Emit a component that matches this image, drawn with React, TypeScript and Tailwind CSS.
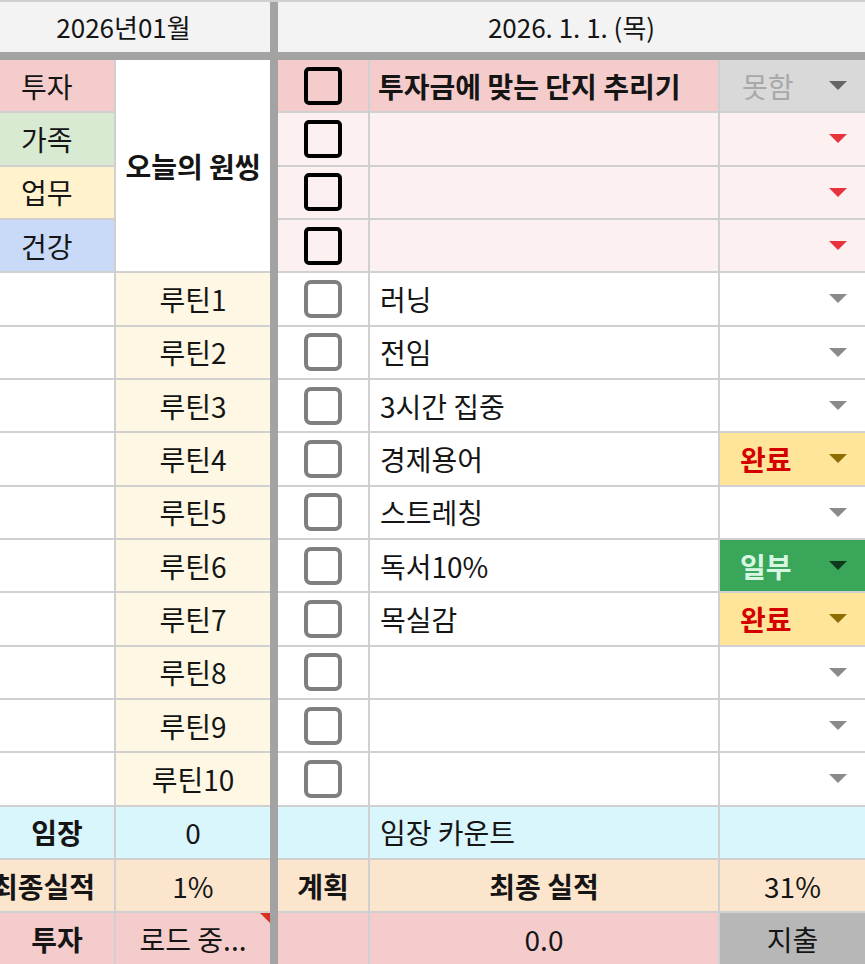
import React from "react";

const FONT = { fontFamily: '"Noto Sans CJK KR", "Noto Sans", sans-serif' };

function Tri({ color }: { color: string }) {
  return (
    <svg width="18" height="9" viewBox="0 0 18 9" className="shrink-0">
      <polygon points="0,0 18,0 9,9" fill={color} />
    </svg>
  );
}

function Box({ dark }: { dark?: boolean }) {
  return dark ? (
    <div className="w-[38px] h-[38px] rounded-[5px] border-[4px] border-black bg-transparent" />
  ) : (
    <div className="w-[38px] h-[38px] rounded-[7px] border-[4px] border-[#7f7f7f] bg-white" />
  );
}

type Status = "" | "완료" | "일부";

const routines: { n: number; text: string; status: Status }[] = [
  { n: 1, text: "러닝", status: "" },
  { n: 2, text: "전임", status: "" },
  { n: 3, text: "3시간 집중", status: "" },
  { n: 4, text: "경제용어", status: "완료" },
  { n: 5, text: "스트레칭", status: "" },
  { n: 6, text: "독서10%", status: "일부" },
  { n: 7, text: "목실감", status: "완료" },
  { n: 8, text: "", status: "" },
  { n: 9, text: "", status: "" },
  { n: 10, text: "", status: "" },
];

function StatusCell({ status }: { status: Status }) {
  if (status === "완료") {
    return (
      <div className="bg-[#ffe599] flex items-center justify-between pl-[20px] pr-[18px]">
        <span className="text-[#d40000] font-bold">완료</span>
        <Tri color="#8c6d00" />
      </div>
    );
  }
  if (status === "일부") {
    return (
      <div className="bg-[#3aa65a] flex items-center justify-between pl-[20px] pr-[18px]">
        <span className="text-[#d8f7e2] font-bold">일부</span>
        <Tri color="#0d3a1c" />
      </div>
    );
  }
  return (
    <div className="bg-white flex items-center justify-end pr-[18px]">
      <Tri color="#8a8a8a" />
    </div>
  );
}

export default function App() {
  return (
    <div
      className="w-[865px] h-[964px] overflow-hidden bg-white text-[28px] text-[#151515] leading-none"
      style={FONT}
    >
      <div className="border-t-2 border-[#d0d0d0]">
        {/* header */}
        <div className="grid grid-cols-[114px_154px_4px_90px_348px_145px] gap-x-[2px] h-[50px] bg-[#f3f3f3] text-[26px]">
          <div className="col-span-2 flex items-center justify-center pr-[23px]">2026년01월</div>
          <div className="bg-[#a3a3a3] -mx-[2px]" />
          <div className="col-span-3 flex items-center justify-center">2026. 1. 1. (목)</div>
        </div>
        <div className="h-[8px] bg-[#a3a3a3]" />
        {/* body */}
        <div className="grid grid-cols-[114px_154px_4px_90px_348px_145px] auto-rows-[51.33px] gap-[2px] bg-[#d0d0d0]">
          {/* bar */}
          <div className="col-start-3 row-start-1 row-span-17 bg-[#a3a3a3] -mx-[2px]" />

          {/* category labels */}
          <div className="col-start-1 row-start-1 bg-[#f4cccc] flex items-center pl-[21px]">투자</div>
          <div className="col-start-1 row-start-2 bg-[#d9ead3] flex items-center pl-[21px]">가족</div>
          <div className="col-start-1 row-start-3 bg-[#fff2cc] flex items-center pl-[21px]">업무</div>
          <div className="col-start-1 row-start-4 bg-[#c9daf8] flex items-center pl-[21px]">건강</div>
          <div className="col-start-2 row-start-1 row-span-4 bg-white flex items-center justify-center font-bold">
            오늘의 원씽
          </div>

          {/* one thing rows */}
          <div className="col-start-4 row-start-1 bg-[#f4cccc] flex items-center justify-center">
            <Box dark />
          </div>
          <div className="col-start-5 row-start-1 bg-[#f4cccc] flex items-center pl-[8px] font-bold whitespace-nowrap overflow-hidden">
            투자금에 맞는 단지 추리기
          </div>
          <div className="col-start-6 row-start-1 bg-[#d9d9d9] flex items-center justify-between pl-[22px] pr-[18px]">
            <span className="text-[#a8a8a8]">못함</span>
            <Tri color="#666666" />
          </div>
          {[2, 3, 4].map((r) => (
            <React.Fragment key={r}>
              <div
                className="col-start-4 bg-[#fdf0f0] flex items-center justify-center"
                style={{ gridRowStart: r }}
              >
                <Box dark />
              </div>
              <div className="col-start-5 bg-[#fdf0f0]" style={{ gridRowStart: r }} />
              <div
                className="col-start-6 bg-[#fdf0f0] flex items-center justify-end pr-[18px]"
                style={{ gridRowStart: r }}
              >
                <Tri color="#e8323c" />
              </div>
            </React.Fragment>
          ))}

          {/* routines */}
          {routines.map((rt, i) => (
            <React.Fragment key={rt.n}>
              <div className="col-start-1 bg-white" style={{ gridRowStart: 5 + i }} />
              <div
                className="col-start-2 bg-[#fdf7e4] flex items-center justify-center"
                style={{ gridRowStart: 5 + i }}
              >
                루틴{rt.n}
              </div>
              <div
                className="col-start-4 bg-white flex items-center justify-center"
                style={{ gridRowStart: 5 + i }}
              >
                <Box />
              </div>
              <div
                className="col-start-5 bg-white flex items-center pl-[10px]"
                style={{ gridRowStart: 5 + i }}
              >
                {rt.text}
              </div>
              <div className="col-start-6 grid" style={{ gridRowStart: 5 + i }}>
                <StatusCell status={rt.status} />
              </div>
            </React.Fragment>
          ))}

          {/* 임장 */}
          <div className="col-start-1 row-start-15 bg-[#d9f6fc] flex items-center justify-center font-bold">임장</div>
          <div className="col-start-2 row-start-15 bg-[#d9f6fc] flex items-center justify-center">0</div>
          <div className="col-start-4 row-start-15 bg-[#d9f6fc]" />
          <div className="col-start-5 row-start-15 bg-[#d9f6fc] flex items-center pl-[10px]">임장 카운트</div>
          <div className="col-start-6 row-start-15 bg-[#d9f6fc]" />

          {/* 최종실적 */}
          <div className="col-start-1 row-start-16 bg-[#fce5cd] flex items-center justify-end pr-[19px] font-bold overflow-hidden whitespace-nowrap">
            최종실적
          </div>
          <div className="col-start-2 row-start-16 bg-[#fce5cd] flex items-center justify-center">1%</div>
          <div className="col-start-4 row-start-16 bg-[#fce5cd] flex items-center justify-center font-bold">계획</div>
          <div className="col-start-5 row-start-16 bg-[#fce5cd] flex items-center justify-center font-bold">최종 실적</div>
          <div className="col-start-6 row-start-16 bg-[#fce5cd] flex items-center justify-center">31%</div>

          {/* 투자 */}
          <div className="col-start-1 row-start-17 bg-[#f4cccc] flex items-center justify-center font-bold">투자</div>
          <div className="col-start-2 row-start-17 bg-[#f4cccc] relative flex items-center justify-center">
            로드 중...
            <div className="absolute top-0 right-0 w-0 h-0 border-t-[10px] border-t-[#d93025] border-l-[10px] border-l-transparent" />
          </div>
          <div className="col-start-4 row-start-17 bg-[#f4cccc]" />
          <div className="col-start-5 row-start-17 bg-[#f4cccc] flex items-center justify-center">0.0</div>
          <div className="col-start-6 row-start-17 bg-[#b7b7b7] flex items-center justify-center">지출</div>
        </div>
      </div>
    </div>
  );
}
